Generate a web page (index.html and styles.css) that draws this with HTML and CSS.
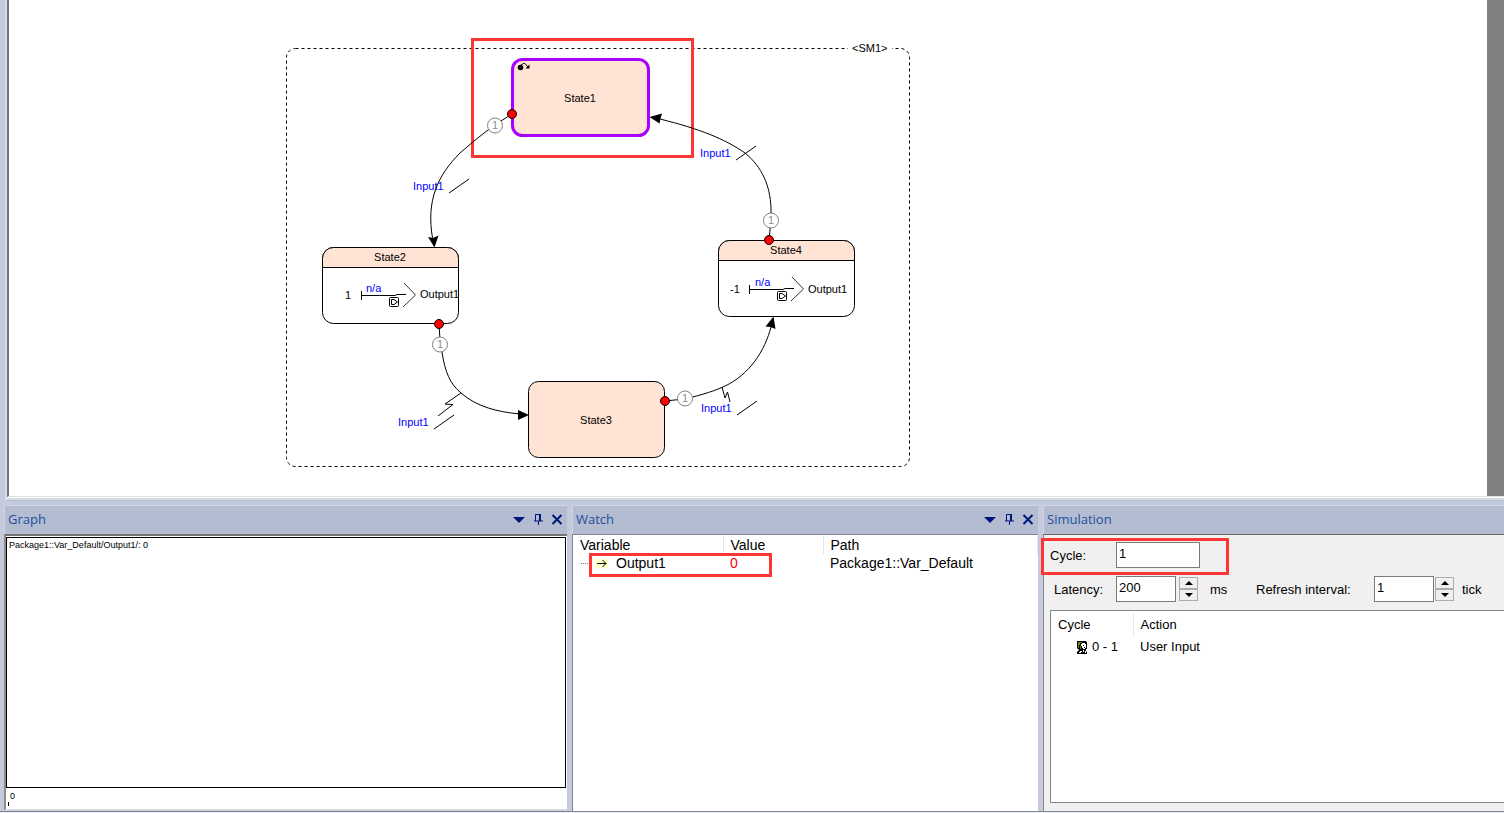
FILE: index.html
```html
<!DOCTYPE html>
<html lang="en">
<head>
<meta charset="utf-8">
<title>State machine simulation</title>
<link rel="stylesheet" href="styles.css">
</head>
<body>
<main class="workspace">
  <div class="canvas">
    <svg class="diagram" width="960" height="496" viewBox="9 0 960 496" role="img" aria-label="State machine SM1">
      <defs>
        <g id="flow">
          <path class="line" d="M361.500 291V300M361 295.500H395L397 294.500H406"/>
          <path class="thin" d="M404 283L415.500 295L403 307"/>
          <rect class="line" x="389.500" y="297.500" width="9" height="9" rx="1"/>
          <path class="line" d="M391.500 299.500H394L397.500 302L394 304.500H391.500Z"/>
        </g>
      </defs>
      <rect class="region" x="286.500" y="48.500" width="623" height="418" rx="9"/>
      <rect class="blank" x="848" y="44" width="44" height="10"/>
      <text class="label" x="852" y="52">&lt;SM1&gt;</text>

      <rect class="note" x="472.500" y="39.500" width="220" height="117"/>

      <rect class="state active" x="512.500" y="59.500" width="136" height="76" rx="10"/>
      <circle cx="520.500" cy="67.500" r="2.800"/>
      <path class="line" d="M521 65L523.500 63.500H525L528 67"/>
      <path d="M529.500 64.500V68.500H525.500Z"/>
      <text class="label mid" x="580" y="102">State1</text>

      <rect class="state empty" x="322.500" y="247.500" width="136" height="76" rx="11"/>
      <path class="state" d="M322.500 267.500V258.500A11 11 0 0 1 333.500 247.500H447.500A11 11 0 0 1 458.500 258.500V267.500Z"/>
      <text class="label mid" x="390" y="261">State2</text>
      <text class="label" x="345" y="299">1</text>
      <text class="label blue" x="366" y="292">n/a</text>
      <use href="#flow"/>
      <text class="label" x="420" y="298">Output1</text>

      <rect class="state" x="528.500" y="381.500" width="136" height="76" rx="10"/>
      <text class="label mid" x="596" y="424">State3</text>

      <rect class="state empty" x="718.500" y="240.500" width="136" height="76" rx="11"/>
      <path class="state" d="M718.500 260.500V251.500A11 11 0 0 1 729.500 240.500H843.500A11 11 0 0 1 854.500 251.500V260.500Z"/>
      <text class="label mid" x="786" y="254">State4</text>
      <text class="label" x="730" y="293">-1</text>
      <text class="label blue" x="755" y="286">n/a</text>
      <use href="#flow" x="388" y="-6"/>
      <text class="label" x="808" y="293">Output1</text>

      <text class="label blue" x="413" y="190">Input1</text>
      <text class="label blue" x="700" y="157">Input1</text>
      <text class="label blue" x="398" y="426">Input1</text>
      <text class="label blue" x="701" y="412">Input1</text>

      <path class="line" d="M512 114Q488 128 460 153C438 175 426 200 432.500 238"/>
      <path d="M434.500 247.500L428 237L433 238L438.500 235.500Z"/>
      <path class="line" d="M769 240L771 220V208C770 185 762 167 745 153C725 139 700 129 660 119"/>
      <path d="M649.500 117L662 113.500L660.500 118.500L659.500 123.500Z"/>
      <path class="line" d="M439 324L440 340L442 352C445 372 450 384 461 393C477 407 498 412 520 414"/>
      <path d="M529 415L518 410V420Z"/>
      <path class="line" d="M665 401L684 399C694 397 712 392 723 387C750 375 765 350 771 327"/>
      <path d="M773.500 316.500L765.500 326.500L770.500 327L775.500 329Z"/>
      <path class="line" d="M461 393L445 404L453 404.500L438 416M722 387L725 398L727.500 392L730 402"/>
      <path class="line" d="M449 193L469 179M736 160L756 146M434 429L454 415M737 415L757 401"/>

      <g class="port">
        <circle cx="512" cy="114" r="4.500"/><circle cx="439" cy="324" r="4.500"/>
        <circle cx="665" cy="401" r="4.500"/><circle cx="769" cy="240" r="4.500"/>
      </g>
      <g class="priority">
        <circle cx="495" cy="125.500" r="7.500"/><circle cx="440" cy="344.500" r="7.500"/>
        <circle cx="685" cy="398.500" r="7.500"/><circle cx="771" cy="220.500" r="7.500"/>
      </g>
      <text class="order" x="495" y="129">1</text>
      <text class="order" x="440" y="348">1</text>
      <text class="order" x="685" y="402">1</text>
      <text class="order" x="771" y="224">1</text>
    </svg>
  </div>
</main>

<div class="dock">
  <section class="panel graph">
    <header class="title">
      <h2>Graph</h2>
      <button type="button" aria-label="Menu"><svg width="12" height="12"><path d="M0 4H12L6 10Z"/></svg></button>
      <button type="button" aria-label="Pin"><svg width="12" height="12"><path class="stroke" d="M3.500 8V1.500H8M2 8H11M6.500 8V12"/><path d="M7 1H9V8H7Z"/></svg></button>
      <button type="button" aria-label="Close"><svg width="12" height="12"><path class="cross" d="M1.500 2L10.500 11M10.500 2L1.500 11"/></svg></button>
    </header>
    <div class="body">
      <div class="plot">Package1::Var_Default/Output1/: 0</div>
      <div class="axis">0</div>
    </div>
  </section>

  <section class="panel watch">
    <header class="title">
      <h2>Watch</h2>
      <button type="button" aria-label="Menu"><svg width="12" height="12"><path d="M0 4H12L6 10Z"/></svg></button>
      <button type="button" aria-label="Pin"><svg width="12" height="12"><path class="stroke" d="M3.500 8V1.500H8M2 8H11M6.500 8V12"/><path d="M7 1H9V8H7Z"/></svg></button>
      <button type="button" aria-label="Close"><svg width="12" height="12"><path class="cross" d="M1.500 2L10.500 11M10.500 2L1.500 11"/></svg></button>
    </header>
    <div class="body">
      <table class="variables">
        <thead><tr><th class="name">Variable</th><th class="value">Value</th><th>Path</th></tr></thead>
        <tbody><tr>
          <td><span class="entry"><svg width="28" height="12"><path class="twig" d="M1 6.500H12"/><path class="glow" d="M15 2H28V11H15Z"/><path class="stroke arrow" d="M17 6.500H26M22.500 3L26 6.500L22.500 10"/></svg>Output1</span></td>
          <td class="changed">0</td>
          <td>Package1::Var_Default</td>
        </tr></tbody>
      </table>
      <div class="mark mark-watch"></div>
    </div>
  </section>

  <section class="panel simulation">
    <header class="title"><h2>Simulation</h2></header>
    <div class="body">
      <div class="row">
        <label class="lead" for="cycle">Cycle:</label>
        <input id="cycle" class="wide" value="1">
      </div>
      <div class="row">
        <label class="lead inset" for="latency">Latency:</label>
        <input id="latency" value="200">
        <span class="spin far">
          <button type="button" aria-label="Raise latency"><svg width="8" height="4"><path d="M4 0L8 4H0Z"/></svg></button>
          <button type="button" aria-label="Lower latency"><svg width="8" height="4"><path d="M0 0H8L4 4Z"/></svg></button>
        </span>
        <span class="unit ms">ms</span>
        <label class="refresh" for="refresh">Refresh interval:</label>
        <input id="refresh" value="1">
        <span class="spin">
          <button type="button" aria-label="Raise interval"><svg width="8" height="4"><path d="M4 0L8 4H0Z"/></svg></button>
          <button type="button" aria-label="Lower interval"><svg width="8" height="4"><path d="M0 0H8L4 4Z"/></svg></button>
        </span>
        <span class="unit">tick</span>
      </div>
      <div class="list">
        <table class="actions">
          <thead><tr><th>Cycle</th><th>Action</th></tr></thead>
          <tbody><tr>
            <td><span class="user"><svg width="12" height="13" viewBox="0 0 12 13"><path d="M1 0H10L11 2V8H10V10L11 11V13H1V11L3 9L1 7Z"/><path class="hair" d="M2 1H6V2H4V4H3V7H2ZM4 5H5V8H4Z"/><path class="face" d="M6 2H9V3H10V7H9V8H7V7H6V5H5V3H6Z"/><path d="M7 4H8V5H7ZM8 6H9V7H8Z"/><path class="face" d="M3 11H4V10H6V11H5V12H3ZM7 9H8V11H7ZM9 10H10V12H9Z"/></svg>0 - 1</span></td>
            <td>User Input</td>
          </tr></tbody>
        </table>
      </div>
      <div class="mark mark-cycle"></div>
    </div>
  </section>
</div>
</body>
</html>
```
FILE: styles.css
```css
* { box-sizing: border-box; }

body {
  margin: 0;
  min-height: 100vh;
  display: flex;
  flex-direction: column;
  background: #c5cbdc;
  border-bottom: 1px solid #e6ebf5;
  font-family: "Liberation Sans", Arial, sans-serif;
  font-size: 13px;
  color: #000;
  overflow: hidden;
}

.workspace {
  margin-left: 5px;
  border-left: 2px solid #d5dce8;
  border-bottom: 1px solid #b4bfcb;
  background: #d5dce8;
}

.canvas {
  background: #fff;
  border-left: 2px solid #747474;
  border-bottom: 1px solid #e3e3e3;
  box-shadow: inset -17px 0 #808080, 0 1px #fff;
  margin-bottom: 3px;
}

.diagram { display: block; }
.region { fill: none; stroke: #000; stroke-dasharray: 3 3; }
.blank { fill: #fff; }
.label { font-size: 11px; }
.mid { text-anchor: middle; }
.blue { fill: #00f; }
.note { fill: none; stroke: #fc3535; stroke-width: 3; }
.state { fill: #ffe3d5; stroke: #000; }
.empty { fill: #fff; }
.active { stroke: #a800ff; stroke-width: 3; }
.line { fill: none; stroke: #000; }
.thin { fill: none; stroke: #333; }
.port { fill: #f00; stroke: #000; }
.priority { fill: #fff; stroke: #808080; }
.order { font-size: 11px; fill: #909090; text-anchor: middle; }

.dock {
  flex: 1;
  display: flex;
  gap: 5px;
  padding: 4px 0 0 4px;
  border-bottom: 1px solid #828790;
}

.panel {
  display: flex;
  flex-direction: column;
  min-width: 0;
}
.graph { flex: 563 1 0; }
.watch { flex: 466 1 0; }
.simulation { flex: 461 1 0; }

.title {
  display: flex;
  align-items: center;
  height: 29px;
  padding: 0 1px 2px 3px;
  background: #b4bcd2;
  border: 1px solid #d0d6e4;
  border-width: 1px 0 0 1px;
}
.title h2 {
  flex: 1;
  margin: 0;
  font: 13px "Open Sans", "Noto Sans", sans-serif;
  color: #1f4f9c;
}
.title button {
  width: 19px;
  height: 20px;
  padding: 0;
  border: 0;
  background: none;
  display: grid;
  place-items: center;
  fill: #00157a;
}
.stroke { fill: none; stroke: #00157a; }
.cross { fill: none; stroke: #00157a; stroke-width: 2; }

.body {
  position: relative;
  flex: 1;
  display: flex;
  flex-direction: column;
  background: #fff;
  border: 1px solid #828790;
  border-width: 1px 0 0 1px;
}

.graph .body {
  border-top: 2px solid #747474;
  border-left: 2px solid #8c8c8c;
  border-bottom: 1px solid #e3e3e3;
  margin-bottom: 1px;
}
.plot {
  flex: 1;
  margin: 1px 1px 0 0;
  border: 1px solid #000;
  padding: 2px;
  font-size: 9px;
  line-height: 11px;
}
.axis {
  height: 21px;
  padding: 3px 4px;
  font-size: 9px;
  line-height: 11px;
  background: linear-gradient(#000, #000) 2px 14px / 1px 4px no-repeat;
}

table { border-collapse: collapse; table-layout: fixed; width: 100%; }
th, td { padding: 0; text-align: left; font-weight: normal; }

.variables { font-size: 14px; line-height: 18px; margin-top: 1px; }
.variables th, .variables td { padding-left: 7px; }
.variables th { border-right: 1px solid #e5e5e5; }
.name { width: 150px; }
.value { width: 100px; }
.entry { display: flex; align-items: center; gap: 8px; }
.changed { color: #f00; }
.twig { stroke: #808080; stroke-dasharray: 1 1; }
.glow { fill: #ffffc8; }
.arrow { stroke: #000; }

.mark { position: absolute; border: 3px solid #fc3535; pointer-events: none; }
.mark-watch { left: 16px; top: 18px; width: 183px; height: 24px; }
.mark-cycle { left: -3px; top: 3px; width: 188px; height: 37px; }

.simulation .body {
  background: #f0f0f0;
  border-top: 1px solid #696969;
  padding: 7px 0 8px 6px;
}
.row { display: flex; align-items: center; height: 26px; margin-bottom: 8px; white-space: nowrap; }
.lead { width: 66px; flex: none; }
.inset { padding-left: 4px; }
.row input {
  flex: none;
  width: 60px;
  height: 26px;
  border: 1px solid #7a7a7a;
  border-radius: 0;
  padding: 0 2px 4px;
  background: #fff;
  font: inherit;
}
.row .wide { width: 84px; }
.spin { display: flex; flex-direction: column; flex: none; width: 19px; margin-left: 1px; }
.far { margin-left: 3px; }
.spin button {
  height: 12px;
  padding: 0;
  border: 1px solid #adadad;
  background: #f0f0f0;
  display: grid;
  place-items: center;
}
.unit { margin-left: 8px; }
.ms { width: 46px; margin-left: 12px; }
.refresh { width: 118px; flex: none; }

.list {
  flex: 1;
  background: #fff;
  border: 1px solid #828790;
  border-right: 0;
}
.actions { line-height: 22px; margin-top: 3px; }
.actions th, .actions td { padding-left: 7px; }
.actions th:first-child { width: 82px; border-right: 1px solid #e5e5e5; }
.user { display: flex; align-items: center; gap: 4px; padding-left: 18px; }
.hair { fill: #808000; }
.face { fill: #fff; }
```
